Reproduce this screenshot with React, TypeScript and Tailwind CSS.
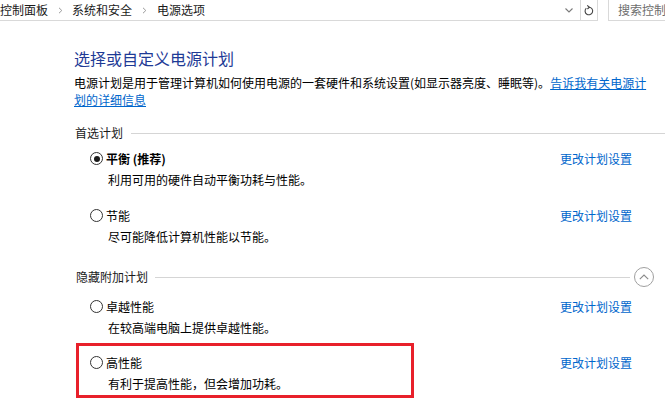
import React from "react";

const FONT = '"Noto Sans CJK SC", "Noto Sans", "Liberation Sans", sans-serif';

function Crumb() {
  return (
    <svg width="5" height="7" viewBox="0 0 5 7" className="shrink-0">
      <path d="M1 0.8 L3.8 3.5 L1 6.2" fill="none" stroke="#9a9a9a" strokeWidth="1" />
    </svg>
  );
}

function Radio({ checked }: { checked?: boolean }) {
  return (
    <div className="w-[13px] h-[13px] rounded-full border border-[#333333] flex items-center justify-center shrink-0 bg-white">
      {checked && <div className="w-[6px] h-[6px] rounded-full bg-[#1a1a1a]" />}
    </div>
  );
}

function Plan({
  title,
  desc,
  checked,
  bold,
  className,
}: {
  title: string;
  desc: string;
  checked?: boolean;
  bold?: boolean;
  className?: string;
}) {
  return (
    <div className={"flex " + (className ?? "")}>
      <div className="flex-1 flex flex-col">
        <div className="h-[21px] flex items-center pl-[16px] gap-[3px]">
          <Radio checked={checked} />
          <span className={"text-[12px] leading-[21px] text-black " + (bold ? "font-bold" : "")}>{title}</span>
        </div>
        <div className="h-[21px] flex items-center pl-[34px] text-[12px] text-black">{desc}</div>
      </div>
      <div className="w-[72px] mr-[33px] h-[21px] flex items-center text-[12px] text-[#0066cc] whitespace-nowrap">
        更改计划设置
      </div>
    </div>
  );
}

export default function App() {
  return (
    <div
      className="w-[665px] h-[408px] overflow-hidden bg-white relative text-black"
      style={{ fontFamily: FONT }}
    >
      {/* top bar */}
      <div className="flex h-[21px]">
        <div className="flex w-[598px] border-b border-r border-[#d9d9d9] items-center">
          <div className="flex items-center text-[12px] leading-[20px] text-[#1a1a1a] whitespace-nowrap">
            <span>控制面板</span>
            <span className="ml-[10px] mr-[9px] flex items-center">
              <Crumb />
            </span>
            <span>系统和安全</span>
            <span className="ml-[10px] mr-[10px] flex items-center">
              <Crumb />
            </span>
            <span>电源选项</span>
          </div>
          <div className="flex-1" />
          <div className="w-[22px] h-full flex items-center justify-center">
            <svg width="8" height="5" viewBox="0 0 8 5">
              <path d="M0.5 0.5 L4 4 L7.5 0.5" fill="none" stroke="#7a7a7a" strokeWidth="1.1" />
            </svg>
          </div>
          <div className="w-[17px] h-full border-l border-[#d9d9d9] flex items-center justify-center">
            <svg width="10" height="11" viewBox="0 0 10 11">
              <path d="M2.3 3.2 A3.8 3.8 0 1 0 5 2.2" fill="none" stroke="#444" strokeWidth="1.1" />
              <path d="M3.2 0.4 L5.4 2.2 L3.4 4" fill="none" stroke="#444" strokeWidth="1.1" />
            </svg>
          </div>
        </div>
        <div className="w-[10px]" />
        <div className="flex-1 border-l border-b border-[#d9d9d9] pl-[9px] text-[12px] leading-[20px] text-[#6d6d6d] whitespace-nowrap overflow-hidden">
          搜索控制面板
        </div>
      </div>

      {/* content */}
      <div className="pl-[74px] flex flex-col">
        <div className="mt-[27px] h-[21px] text-[16px] leading-[21px] text-[#1e3a96] whitespace-nowrap">
          选择或自定义电源计划
        </div>
        <div className="mt-[5px] text-[12px] leading-[17px] text-black whitespace-nowrap">
          电源计划是用于管理计算机如何使用电源的一套硬件和系统设置(如显示器亮度、睡眠等)。
          <span className="text-[#0066cc] underline">告诉我有关电源计</span>
          <br />
          <span className="text-[#0066cc] underline">划的详细信息</span>
        </div>

        <div className="mt-[16px] h-[18px] flex items-center pl-[1px]">
          <span className="text-[12px] text-[#1a1a1a] whitespace-nowrap">首选计划</span>
          <div className="flex-1 ml-[8px] h-px bg-[#d5d5d5]" />
        </div>

        <Plan className="mt-[6px]" title="平衡 (推荐)" desc="利用可用的硬件自动平衡功耗与性能。" checked bold />
        <Plan className="mt-[15px]" title="节能" desc="尽可能降低计算机性能以节能。" />

        <div className="mt-[20px] h-[20px] flex items-center pl-[2px]">
          <span className="text-[12px] text-[#1a1a1a] whitespace-nowrap">隐藏附加计划</span>
          <div className="flex-1 ml-[7px] h-px bg-[#d5d5d5]" />
          <div className="ml-[4px] mr-[11px] w-[20px] h-[20px] rounded-full border border-[#a0a0a0] flex items-center justify-center">
            <svg width="10" height="6" viewBox="0 0 10 6">
              <path d="M0.8 5.2 L5 1 L9.2 5.2" fill="none" stroke="#8a8a8a" strokeWidth="1.1" />
            </svg>
          </div>
        </div>

        <Plan className="mt-[9px]" title="卓越性能" desc="在较高端电脑上提供卓越性能。" />
        <Plan className="mt-[14px]" title="高性能" desc="有利于提高性能，但会增加功耗。" />
      </div>

      {/* red annotation box */}
      <div className="absolute left-[76px] top-[343px] w-[338px] h-[55px] border-[3px] border-[#e8202a]" />
    </div>
  );
}
